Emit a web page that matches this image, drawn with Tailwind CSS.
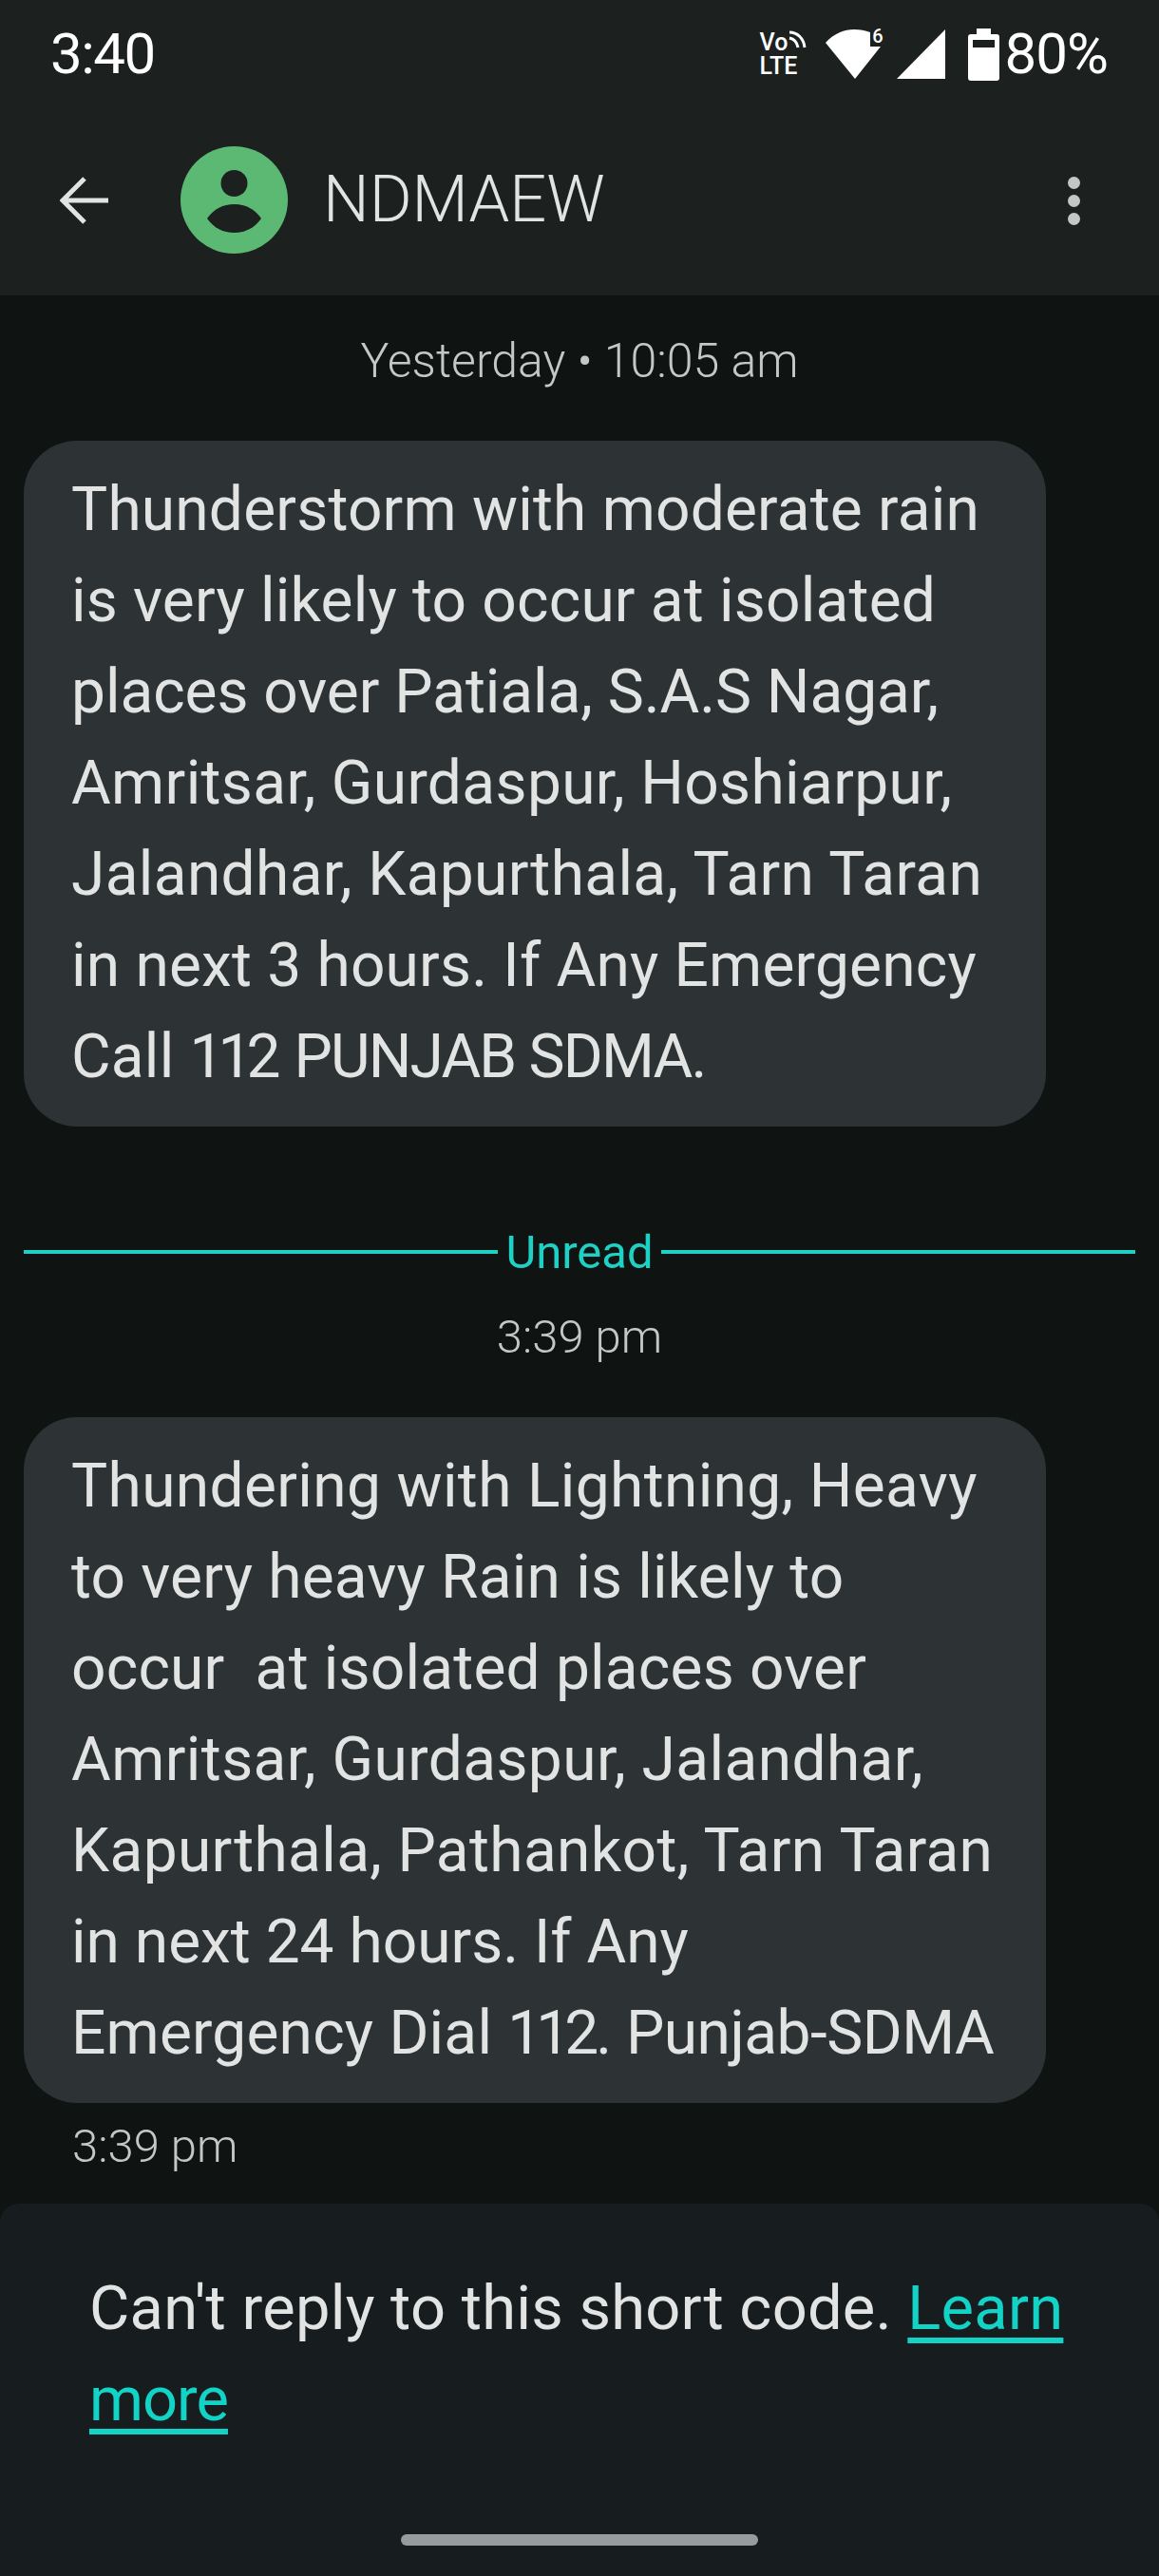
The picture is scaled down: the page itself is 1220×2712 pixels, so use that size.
<!DOCTYPE html>
<html lang="en">
<head>
    <meta charset="UTF-8">
    <meta name="viewport" content="width=device-width, initial-scale=1.0">
    <title>NDMAEW</title>
    <script src="https://cdn.jsdelivr.net/npm/@tailwindcss/browser@4"></script>
</head>
<body class="w-[1220px] h-[2712px] overflow-hidden flex flex-col bg-[#0f1413] font-['Roboto',sans-serif] text-[#e2e4e3]">
    <!-- Status bar + app bar -->
    <div class="h-[311px] shrink-0 bg-[#1c2120] flex flex-col">
        <div class="h-[114px] flex items-center justify-between pl-[53px] pr-[54px] text-white">
            <div class="text-[60px] leading-none tracking-[-1.5px]">3:40</div>
            <div class="flex items-center">
                <div class="w-[50px] mr-[19px] text-[25px] leading-[25px] font-medium">
                    <div class="flex items-start">
                        Vo
                        <svg class="w-[20px] h-[20px]" viewBox="0 0 20 20" fill="none" stroke="#fff" stroke-width="3">
                            <path d="M2 2c8 0 15 6 16 16M2 8c5 1 8 5 9 10"/>
                        </svg>
                    </div>
                    <div>LTE</div>
                </div>
                <div class="relative w-[60px] h-[54px] mr-[15px]">
                    <svg class="w-[60px] h-[54px]" viewBox="0 0 60 54" fill="#fff">
                        <path d="M0 15C9 5 20 1 30 1c6 0 12 1 17 3v15h11L31 53Z"/>
                    </svg>
                    <span class="absolute right-[-1px] top-[-2px] text-[20px] leading-[20px] font-medium">6</span>
                </div>
                <svg class="w-[52px] h-[52px] mr-[23px]" viewBox="0 0 52 52" fill="#fff"><path d="M51 0v52H0Z"/></svg>
                <svg class="w-[33px] h-[55px] mr-[6px]" viewBox="0 0 33 55" fill="#fff">
                    <path d="M9 0h15v6h6a3 3 0 0 1 3 3v43a3 3 0 0 1-3 3H3a3 3 0 0 1-3-3V9a3 3 0 0 1 3-3h6Z"/>
                    <rect x="5" y="12" width="23" height="8" fill="#1c2120"/>
                </svg>
                <div class="text-[60px] leading-none tracking-[-1px]">80%</div>
            </div>
        </div>
        <div class="h-[197px] flex items-center">
            <svg class="w-[52px] h-[52px] ml-[63px] mr-[75px] -mt-[3px]" viewBox="0 0 52 52" fill="none" stroke="#e2e4e3" stroke-width="5">
                <path d="M51 26H4M26 3 3 26l23 23"/>
            </svg>
            <svg class="w-[113px] h-[113px] -mt-[4px] mr-[37px]" viewBox="0 0 113 113">
                <circle cx="56.5" cy="56.5" r="56.5" fill="#5bb974"/>
                <ellipse cx="56.5" cy="39" rx="14" ry="14" fill="#1c2120"/>
                <path d="M28 76C35 66 45 61 56.5 61S78 66 85 76C78 86 68 91 56.5 91S35 86 28 76Z" fill="#1c2120"/>
            </svg>
            <div class="text-[68.5px] leading-none -mt-[4px] font-light">NDMAEW</div>
            <div class="ml-auto mr-[83px] -mt-[3px] flex flex-col gap-[6px]">
                <div class="w-[13px] h-[13px] rounded-full bg-[#c4c7c5]"></div>
                <div class="w-[13px] h-[13px] rounded-full bg-[#c4c7c5]"></div>
                <div class="w-[13px] h-[13px] rounded-full bg-[#c4c7c5]"></div>
            </div>
        </div>
    </div>

    <!-- Messages -->
    <div class="flex-1 flex flex-col px-[25px]">
        <div class="h-[153px] flex items-start justify-center pt-[47px] text-[50px] leading-[44px] text-[#c4c7c5] font-light">Yesterday • 10:05 am</div>
        <div class="w-[1076px] rounded-[56px] bg-[#2d3235] pl-[50px] pt-[25px] h-[722px] text-[64px] leading-[96px] tracking-[0.2px] whitespace-nowrap">
            <div>Thunderstorm with moderate rain</div>
            <div>is very likely to occur at isolated</div>
            <div class="tracking-[-0.05px]">places over Patiala, S.A.S Nagar,</div>
            <div class="tracking-[0.36px]">Amritsar, Gurdaspur, Hoshiarpur,</div>
            <div class="tracking-[0.35px]">Jalandhar, Kapurthala, Tarn Taran</div>
            <div>in next 3 hours. If Any Emergency</div>
            <div>Call <span class="tracking-[-6px] mr-[4px]">112</span> <span class="tracking-[-1.8px]">PUNJAB SDMA.</span></div>
        </div>

        <div class="mt-[108px] w-[1170px] h-[48px] flex items-center gap-[8px] text-[#1fd0c4] text-[49px] leading-none">
            <div class="flex-1 h-[4px] bg-[#1fd0c4]"></div>
            <div>Unread</div>
            <div class="flex-1 h-[4px] bg-[#1fd0c4]"></div>
        </div>
        <div class="h-[150px] pt-[44px] w-[1170px] text-center text-[49px] leading-[44px] text-[#c4c7c5] font-light">3:39 pm</div>

        <div class="w-[1076px] rounded-[56px] bg-[#2d3235] pl-[50px] pt-[25px] h-[722px] text-[64px] leading-[96px] tracking-[0.2px] whitespace-nowrap">
            <div class="tracking-[0.36px]">Thundering with Lightning, Heavy</div>
            <div>to very heavy Rain is likely to</div>
            <div class="whitespace-pre">occur  at isolated places over</div>
            <div class="tracking-[0.42px]">Amritsar, Gurdaspur, Jalandhar,</div>
            <div class="tracking-[0.35px]">Kapurthala, Pathankot, Tarn Taran</div>
            <div class="tracking-[0px]">in next 24 hours. If Any</div>
            <div>Emergency Dial <span class="tracking-[-6px] mr-[3px]">112</span><span class="tracking-[-0.5px]">. Punjab-SDMA</span></div>
        </div>
        <div class="pl-[51px] pt-[24px] text-[49px] leading-[44px] text-[#c4c7c5] font-light">3:39 pm</div>
    </div>

    <!-- Short code notice -->
    <div class="h-[392px] shrink-0 bg-[#171c1e] rounded-t-[20px] flex flex-col pt-[62px] pl-[94px]">
        <div class="w-[1060px] text-[65px] leading-[96px] tracking-[0.25px]">
            Can't reply to this short code. <a class="text-[#12d3c6] underline underline-offset-[9px] decoration-[6px]">Learn <span class="tracking-[-1px]">more</span></a>
        </div>
        <div class="mt-auto mb-[32px] -ml-[94px] flex justify-center">
            <div class="w-[376px] h-[12px] rounded-full bg-[#979b9d]"></div>
        </div>
    </div>
</body>
</html>
